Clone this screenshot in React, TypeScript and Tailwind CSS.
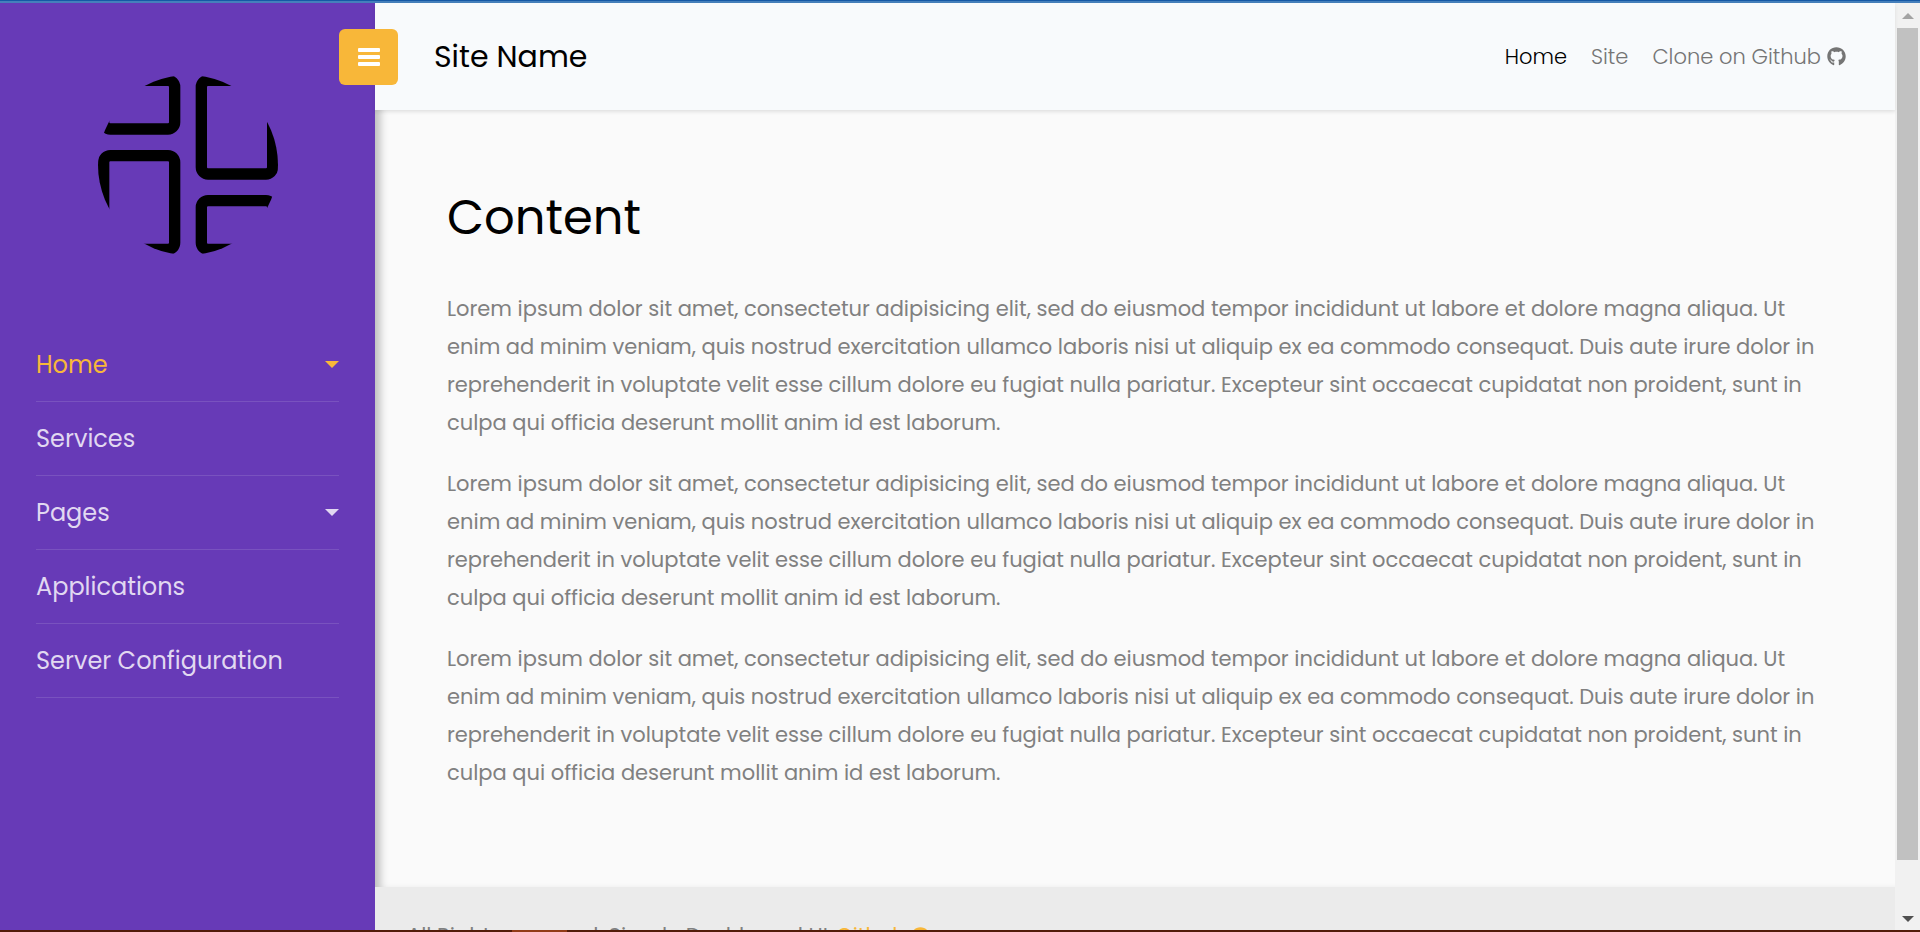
import React from "react";
import { FaGithub } from "react-icons/fa";

const paragraph =
  "Lorem ipsum dolor sit amet, consectetur adipisicing elit, sed do eiusmod tempor incididunt ut labore et dolore magna aliqua. Ut enim ad minim veniam, quis nostrud exercitation ullamco laboris nisi ut aliquip ex ea commodo consequat. Duis aute irure dolor in reprehenderit in voluptate velit esse cillum dolore eu fugiat nulla pariatur. Excepteur sint occaecat cupidatat non proident, sunt in culpa qui officia deserunt mollit anim id est laborum.";

const menu = [
  { label: "Home", active: true, caret: true },
  { label: "Services" },
  { label: "Pages", caret: true },
  { label: "Applications" },
  { label: "Server Configuration" },
];

function Logo() {
  return (
    <svg viewBox="54 45 540 540" className="size-[180px]" role="img" aria-label="Logo">
      <clipPath id="disc">
        <circle cx="324" cy="315" r="270" />
      </clipPath>
      <g clipPath="url(#disc)" fill="none" stroke="#000" strokeWidth="34">
        <rect x="71" y="61" width="213" height="146" rx="20" />
        <rect x="364" y="61" width="214" height="281" rx="20" />
        <rect x="71" y="287" width="213" height="281" rx="20" />
        <rect x="364" y="422" width="214" height="146" rx="20" />
      </g>
    </svg>
  );
}

function Sidebar() {
  return (
    <aside className="w-[375px] shrink-0 bg-[#673ab7] px-9 pt-[72px]">
      <a href="#" className="flex justify-center">
        <Logo />
      </a>
      <nav className="mt-[73px]">
        <ul>
          {menu.map((item) => (
            <li key={item.label} className="border-b border-[#7952bf]">
              <a
                href="#"
                className={
                  item.active
                    ? "flex h-[73px] items-center justify-between text-2xl text-[#f8b739]"
                    : "flex h-[73px] items-center justify-between text-2xl text-[#e1d8f1]"
                }
              >
                {item.label}
                {item.caret && (
                  <svg viewBox="0 0 14 7" className="h-[7px] w-3.5" fill="currentColor" aria-hidden="true">
                    <path d="M0 0h14L7 7z" />
                  </svg>
                )}
              </a>
            </li>
          ))}
        </ul>
      </nav>
    </aside>
  );
}

function Header() {
  return (
    <header className="relative z-10 flex h-[107px] shrink-0 items-center justify-between bg-[#f8fafc] pr-[49px] shadow-[0_2px_4px_rgba(0,0,0,0.08)]">
      <div className="flex items-center gap-9">
        <button
          type="button"
          aria-label="Toggle menu"
          className="-ml-9 flex h-14 w-[59px] items-center justify-center rounded-md bg-[#f8b739]"
        >
          <svg viewBox="0 0 22 18" className="h-[18px] w-[22px]" fill="#fff" aria-hidden="true">
            <rect y="0" width="22" height="4" rx="1" />
            <rect y="7" width="22" height="4" rx="1" />
            <rect y="14" width="22" height="4" rx="1" />
          </svg>
        </button>
        <a href="#" className="text-3xl font-normal text-black">
          Site Name
        </a>
      </div>
      <nav className="flex items-center gap-6 text-[21px] font-light text-[#757575]">
        <a href="#" className="text-black">Home</a>
        <a href="#">Site</a>
        <a href="#" className="flex items-center gap-1.5">
          Clone on Github <FaGithub className="size-[19px]" />
        </a>
      </nav>
    </header>
  );
}

function Scrollbar() {
  return (
    <div className="flex w-[25px] shrink-0 flex-col items-center bg-[#f1f1f1]" aria-hidden="true">
      <div className="flex h-[25px] items-center">
        <svg viewBox="0 0 12 6" className="h-1.5 w-3" fill="#a3a3a3">
          <path d="M0 6h12L6 0z" />
        </svg>
      </div>
      <div className="w-[21px] grow bg-[#c1c1c1]" />
      <div className="flex h-[70px] items-end pb-2">
        <svg viewBox="0 0 12 6" className="h-1.5 w-3" fill="#505050">
          <path d="M0 0h12L6 6z" />
        </svg>
      </div>
    </div>
  );
}

export default function App() {
  return (
    <div className="flex h-screen flex-col overflow-hidden bg-[#fafafa] font-['Poppins','Inter',sans-serif]">
      <div className="h-[3px] shrink-0 border-t border-[#1558a5] bg-[#457fbb]" />
      <div className="flex min-h-0 grow">
        <Sidebar />
        <div className="flex min-w-0 grow flex-col">
          <Header />
          <main className="flex min-h-0 grow flex-col">
            <section className="min-h-0 grow px-18 pt-[78px] shadow-[inset_10px_0_8px_-5px_rgba(0,0,0,0.25)]">
              <h1 className="text-5xl leading-[60px] font-normal text-black">Content</h1>
              <div className="mt-[42px] space-y-[23px] text-[21px] leading-[38px] text-[#808080]">
                <p>{paragraph}</p>
                <p>{paragraph}</p>
                <p>{paragraph}</p>
              </div>
            </section>
            <footer className="h-[43px] shrink-0 overflow-hidden bg-[#ebebeb] px-8 pt-[34px]">
              <p className="flex items-center gap-1 text-[21px] leading-[30px] text-[#808080]">
                All Rights reserved. Simple Dashboard UI.
                <a href="#" className="flex items-center gap-1 text-[#f8b739]">
                  Github <FaGithub className="size-[19px]" />
                </a>
              </p>
            </footer>
          </main>
        </div>
        <Scrollbar />
      </div>
      <div className="flex h-0.5 shrink-0 bg-[#521b08]">
        <div className="ml-[512px] w-[55px] bg-[#923b17]" />
      </div>
    </div>
  );
}
